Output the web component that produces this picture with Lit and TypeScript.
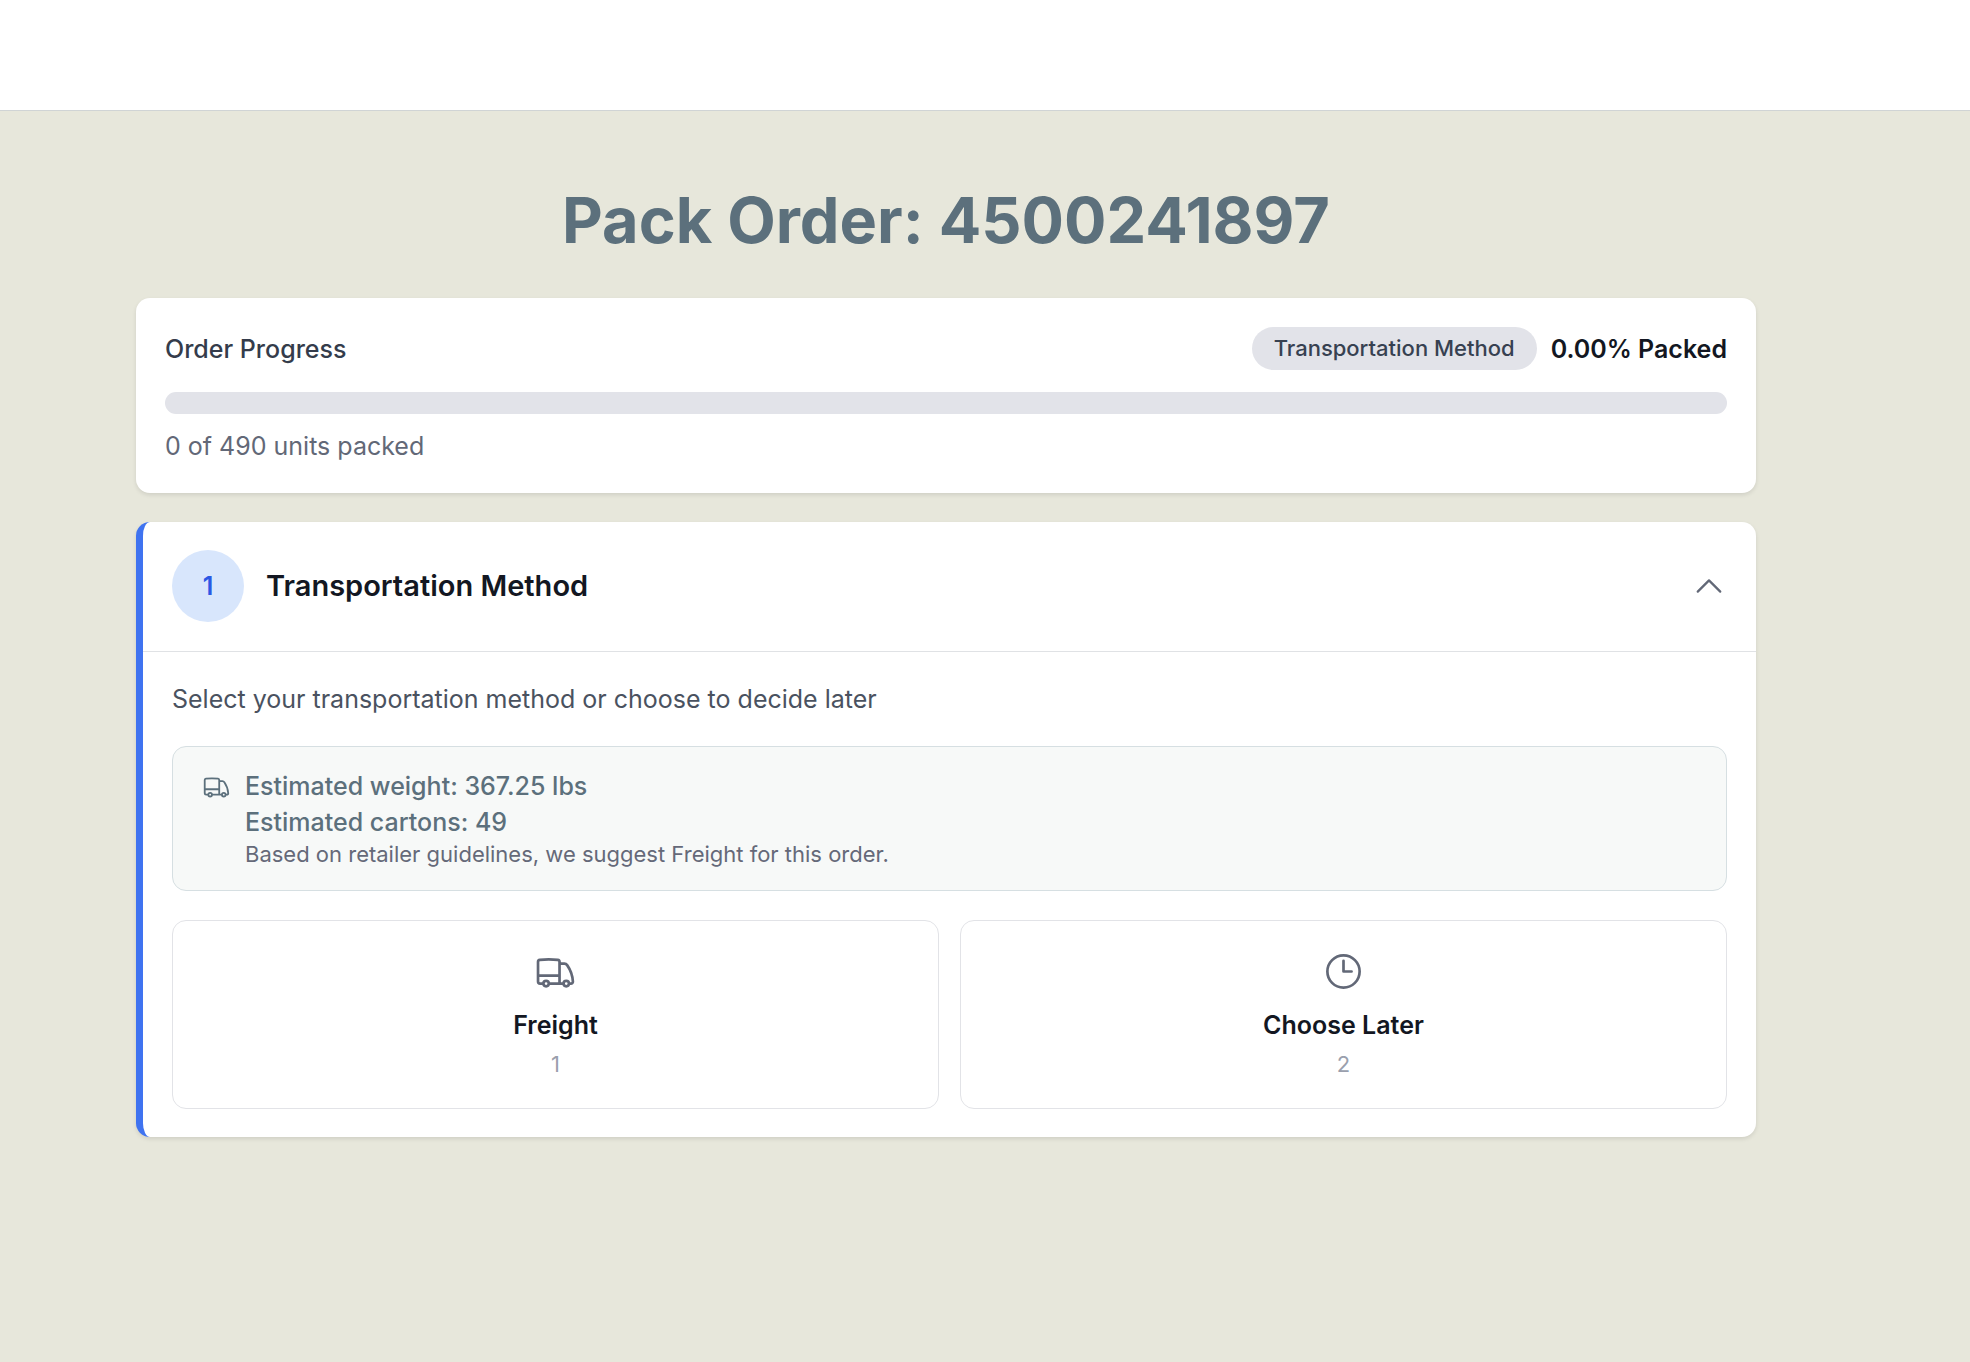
import { LitElement, html, css, svg } from "lit";
import { customElement, property, state } from "lit/decorators.js";

const TRUCK =
  "M8.25 18.75a1.5 1.5 0 0 1-3 0m3 0a1.5 1.5 0 0 0-3 0m3 0h6m-9 0H3.375a1.125 1.125 0 0 1-1.125-1.125V14.25m17.25 4.5a1.5 1.5 0 0 1-3 0m3 0a1.5 1.5 0 0 0-3 0m3 0h1.125c.621 0 1.129-.504 1.09-1.124a17.902 17.902 0 0 0-3.213-9.193 2.056 2.056 0 0 0-1.58-.86H14.25M16.5 18.75h-2.25m0-11.177v-.958c0-.568-.422-1.048-.987-1.106a48.554 48.554 0 0 0-10.026 0 1.106 1.106 0 0 0-.987 1.106v7.635m12-6.677v6.677m0 4.5v-4.5m0 0h-12";
const CLOCK = "M12 6v6h4.5m4.5 0a9 9 0 1 1-18 0 9 9 0 0 1 18 0Z";
const CHEVRON_UP = "m4.5 15.75 7.5-7.5 7.5 7.5";
const CHEVRON_DOWN = "m19.5 8.25-7.5 7.5-7.5-7.5";

@customElement("line-icon")
class LineIcon extends LitElement {
  @property() path = "";

  static styles = css`
    :host {
      display: block;
      flex: none;
    }
    .icon {
      display: block;
      width: 100%;
      height: 100%;
      fill: none;
      stroke: currentColor;
      stroke-width: 1.5;
      stroke-linecap: round;
      stroke-linejoin: round;
    }
  `;

  render() {
    return html`<svg class="icon" viewBox="0 0 24 24" aria-hidden="true">
      ${svg`<path d=${this.path}></path>`}
    </svg>`;
  }
}

@customElement("order-progress")
class OrderProgress extends LitElement {
  @property() step = "";
  @property({ type: Number }) packed = 0;
  @property({ type: Number }) total = 0;

  static styles = css`
    :host {
      display: block;
      background: #fff;
      border-radius: 14px;
      padding: 29px;
      box-shadow: 0 2px 4px rgba(0, 0, 0, 0.1);
    }
    .row {
      display: flex;
      align-items: center;
      justify-content: space-between;
      margin-bottom: 22px;
    }
    .label,
    .percent,
    .units {
      margin: 0;
      font-size: 25px;
      line-height: 36px;
    }
    .label {
      font-weight: 500;
      color: #343c4b;
    }
    .status {
      display: flex;
      align-items: center;
      gap: 14px;
    }
    .pill {
      padding: 7px 22px;
      border-radius: 22px;
      background: #e2e3e9;
      color: #374151;
      font-size: 22px;
      line-height: 29px;
      font-weight: 500;
    }
    .percent {
      font-weight: 600;
      color: #131722;
    }
    .track {
      height: 22px;
      border-radius: 11px;
      background: #e2e3e9;
      overflow: hidden;
      margin-bottom: 14px;
    }
    .fill {
      height: 100%;
      background: #3f73f0;
    }
    .units {
      color: #626877;
    }
  `;

  render() {
    const percent = this.total ? (this.packed / this.total) * 100 : 0;
    return html`
      <div class="row">
        <h2 class="label" id="label">Order Progress</h2>
        <div class="status">
          <span class="pill">${this.step}</span>
          <span class="percent">${percent.toFixed(2)}% Packed</span>
        </div>
      </div>
      <div
        class="track"
        role="progressbar"
        aria-labelledby="label"
        aria-valuemin="0"
        aria-valuemax="100"
        aria-valuenow=${percent}
      >
        <div class="fill" style="width: ${percent}%"></div>
      </div>
      <p class="units">${this.packed} of ${this.total} units packed</p>
    `;
  }
}

@customElement("transport-step")
class TransportStep extends LitElement {
  @state() private open = true;

  private options = [
    { name: "Freight", key: 1, path: TRUCK },
    { name: "Choose Later", key: 2, path: CLOCK },
  ];

  static styles = css`
    :host {
      display: block;
      background: #fff;
      border-radius: 14px;
      border-left: 7px solid #3f73f0;
      box-shadow: 0 2px 4px rgba(0, 0, 0, 0.1);
    }
    button {
      font-family: inherit;
      cursor: pointer;
    }
    .title {
      margin: 0;
    }
    .toggle {
      display: flex;
      align-items: center;
      gap: 22px;
      width: 100%;
      padding: 28px 29px 29px;
      border: 0;
      background: none;
      text-align: left;
      color: #131722;
      font-size: 29px;
      line-height: 44px;
      font-weight: 600;
    }
    .number {
      display: flex;
      align-items: center;
      justify-content: center;
      width: 72px;
      height: 72px;
      border-radius: 50%;
      background: #d8e6fc;
      color: #2b58e4;
      font-size: 25px;
      line-height: 36px;
      font-weight: 600;
    }
    .name {
      flex: 1;
    }
    .chevron {
      width: 36px;
      height: 36px;
      color: #626877;
    }
    .body {
      border-top: 1px solid #e0e2e5;
      padding: 29px 29px 28px;
      display: grid;
      gap: 29px;
    }
    .intro {
      margin: 0;
      font-size: 25px;
      line-height: 36px;
      color: #4a5260;
    }
    .estimate {
      display: flex;
      align-items: flex-start;
      gap: 14px;
      padding: 21px 29px;
      border: 1px solid #d6dfe2;
      border-radius: 14px;
      background: #f7f9f8;
      color: #5c707c;
    }
    .truck {
      width: 29px;
      height: 29px;
      margin-top: 4px;
    }
    .fact {
      margin: 0;
      font-size: 25px;
      line-height: 36px;
      font-weight: 500;
    }
    .note {
      margin: 0;
      font-size: 22px;
      line-height: 29px;
      color: #656979;
    }
    .options {
      display: grid;
      grid-template-columns: 1fr 1fr;
      gap: 21px;
    }
    .option {
      display: flex;
      flex-direction: column;
      align-items: center;
      padding: 29px;
      border: 1px solid #e2e3e7;
      border-radius: 14px;
      background: #fff;
    }
    .glyph {
      width: 43px;
      height: 43px;
      margin-bottom: 14px;
      color: #626877;
    }
    .choice {
      margin-bottom: 7px;
      font-size: 25px;
      line-height: 36px;
      font-weight: 600;
      color: #131722;
    }
    .key {
      font-size: 22px;
      line-height: 29px;
      color: #9a9fad;
    }
  `;

  render() {
    return html`
      <h2 class="title">
        <button
          class="toggle"
          aria-expanded=${this.open}
          @click=${() => (this.open = !this.open)}
        >
          <span class="number">1</span>
          <span class="name">Transportation Method</span>
          <line-icon
            class="chevron"
            .path=${this.open ? CHEVRON_UP : CHEVRON_DOWN}
          ></line-icon>
        </button>
      </h2>
      ${this.open
        ? html`<div class="body">
            <p class="intro">
              Select your transportation method or choose to decide later
            </p>
            <div class="estimate">
              <line-icon class="truck" .path=${TRUCK}></line-icon>
              <div>
                <p class="fact">Estimated weight: 367.25 lbs</p>
                <p class="fact">Estimated cartons: 49</p>
                <p class="note">
                  Based on retailer guidelines, we suggest Freight for this
                  order.
                </p>
              </div>
            </div>
            <div class="options">
              ${this.options.map(
                (o) => html`<button class="option">
                  <line-icon class="glyph" .path=${o.path}></line-icon>
                  <span class="choice">${o.name}</span>
                  <span class="key">${o.key}</span>
                </button>`
              )}
            </div>
          </div>`
        : null}
    `;
  }
}

@customElement("app-root")
class AppRoot extends LitElement {
  static styles = css`
    :host {
      display: flex;
      flex-direction: column;
      min-height: 100vh;
      background: #e7e7db;
      font-family: Inter, "Liberation Sans", sans-serif;
    }
    .topbar {
      height: 110px;
      background: #fff;
      border-bottom: 1px solid #d0d4d5;
    }
    .page {
      display: flex;
      flex-direction: column;
      gap: 29px;
      padding: 72px 214px 72px 136px;
    }
    .heading {
      margin: 0 0 12px;
      font-size: 63px;
      line-height: 74px;
      font-weight: 700;
      text-align: center;
      color: #5c707c;
    }
  `;

  render() {
    return html`
      <header class="topbar"></header>
      <main class="page">
        <h1 class="heading">Pack Order: 4500241897</h1>
        <order-progress
          step="Transportation Method"
          packed="0"
          total="490"
        ></order-progress>
        <transport-step></transport-step>
      </main>
    `;
  }
}
